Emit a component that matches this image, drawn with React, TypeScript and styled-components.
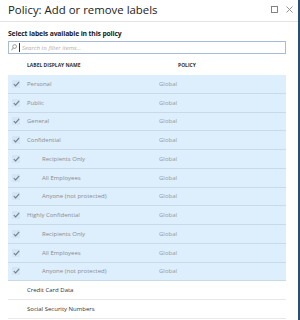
import React from "react";
import styled, { createGlobalStyle } from "styled-components";

const GlobalStyle = createGlobalStyle`
  html, body {
    margin: 0;
    padding: 0;
    background: #ffffff;
  }
  body {
    font-family: "Open Sans", "Noto Sans", sans-serif;
  }
`;

const Panel = styled.div`
  width: 300px;
  height: 320px;
  box-sizing: border-box;
  border-right: 2px solid #2d4e6e;
  background: #fff;
  overflow: hidden;
  display: flex;
  flex-direction: column;
`;

const TitleBar = styled.div`
  height: 22px;
  box-sizing: border-box;
  border-bottom: 1px solid #e4e4e4;
  display: flex;
  align-items: center;
  justify-content: space-between;
  padding: 0 5px 2px 8px;
`;

const Title = styled.h1`
  margin: 0;
  font-size: 11.4px;
  font-weight: 400;
  color: #222;
`;

const WindowButtons = styled.div`
  display: flex;
  align-items: center;
  gap: 8px;
`;

const Body = styled.div`
  padding: 6px 12px 0 8px;
  display: flex;
  flex-direction: column;
`;

const Subtitle = styled.div`
  font-size: 6.8px;
  font-weight: 700;
  letter-spacing: -0.15px;
  color: #222;
  height: 12px;
  line-height: 12px;
`;

const SearchBox = styled.div`
  margin-top: 1px;
  height: 13px;
  box-sizing: border-box;
  border: 1px solid #a9bad6;
  display: flex;
  align-items: center;
  padding-left: 2px;
  gap: 2px;
`;

const Caret = styled.span`
  width: 1px;
  height: 9px;
  background: #333;
`;

const Placeholder = styled.span`
  font-size: 6px;
  font-style: italic;
  color: #b0b0b0;
`;

const HeaderRow = styled.div`
  display: grid;
  grid-template-columns: 151px 1fr;
  height: 21px;
  align-items: center;
  padding-left: 19px;
  font-size: 5px;
  font-weight: 700;
  color: #333;
  text-transform: uppercase;
`;

const Row = styled.div<{ $selected: boolean }>`
  display: grid;
  grid-template-columns: 19px 132px 1fr;
  align-items: center;
  height: 18.75px;
  box-sizing: border-box;
  background: ${(p) => (p.$selected ? "#ddeefc" : "#ffffff")};
  border-bottom: ${(p) =>
    p.$selected ? "1px solid #c9d9e7" : "1.5px solid #e8e8e8"};
  font-size: 6px;
`;

const Check = styled.div`
  width: 8px;
  height: 8px;
  margin-left: 4px;
  background: #d4e5f4;
  display: flex;
  align-items: center;
  justify-content: center;
`;

const Name = styled.span<{ $indent: boolean; $selected: boolean }>`
  padding-left: ${(p) => (p.$indent ? "15px" : "0")};
  color: ${(p) => (p.$selected ? "#8c8c8c" : "#333")};
  white-space: nowrap;
`;

const Policy = styled.span`
  color: #9a9a9a;
`;

type Label = { name: string; indent?: boolean; selected: boolean };

const labels: Label[] = [
  { name: "Personal", selected: true },
  { name: "Public", selected: true },
  { name: "General", selected: true },
  { name: "Confidential", selected: true },
  { name: "Recipients Only", indent: true, selected: true },
  { name: "All Employees", indent: true, selected: true },
  { name: "Anyone (not protected)", indent: true, selected: true },
  { name: "Highly Confidential", selected: true },
  { name: "Recipients Only", indent: true, selected: true },
  { name: "All Employees", indent: true, selected: true },
  { name: "Anyone (not protected)", indent: true, selected: true },
  { name: "Credit Card Data", selected: false },
  { name: "Social Security Numbers", selected: false },
];

const CheckMark = () => (
  <svg width="7" height="6" viewBox="0 0 7 6">
    <path d="M0.8 3.2 L2.6 4.9 L6.2 0.9" fill="none" stroke="#6d7f91" strokeWidth="1.1" />
  </svg>
);

export default function App() {
  return (
    <>
      <GlobalStyle />
      <Panel>
        <TitleBar>
          <Title>Policy: Add or remove labels</Title>
          <WindowButtons>
            <svg width="7" height="7" viewBox="0 0 7 7">
              <rect x="0.5" y="0.5" width="6" height="6" fill="none" stroke="#777" strokeWidth="0.9" />
            </svg>
            <svg width="7" height="7" viewBox="0 0 7 7">
              <path d="M0.5 0.5 L6.5 6.5 M6.5 0.5 L0.5 6.5" stroke="#888" strokeWidth="0.9" />
            </svg>
          </WindowButtons>
        </TitleBar>
        <Body>
          <Subtitle>Select labels available in this policy</Subtitle>
          <SearchBox>
            <svg width="6" height="7" viewBox="0 0 6 7">
              <circle cx="3.6" cy="2.5" r="1.9" fill="none" stroke="#777" strokeWidth="0.7" />
              <path d="M2.3 3.9 L0.4 6.4" stroke="#777" strokeWidth="0.8" />
            </svg>
            <Caret />
            <Placeholder>Search to filter items...</Placeholder>
          </SearchBox>
          <HeaderRow>
            <span>Label display name</span>
            <span>Policy</span>
          </HeaderRow>
          {labels.map((l, i) => (
            <Row key={i} $selected={l.selected}>
              {l.selected ? (
                <Check>
                  <CheckMark />
                </Check>
              ) : (
                <span />
              )}
              <Name $indent={!!l.indent} $selected={l.selected}>
                {l.name}
              </Name>
              <Policy>{l.selected ? "Global" : ""}</Policy>
            </Row>
          ))}
        </Body>
      </Panel>
    </>
  );
}
